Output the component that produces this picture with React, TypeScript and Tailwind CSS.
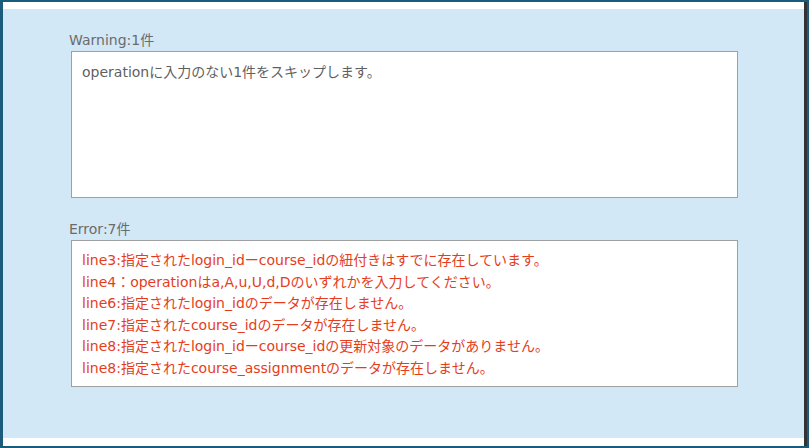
import React from 'react';

const errors = [
  'line3:指定されたlogin_idーcourse_idの紐付きはすでに存在しています。',
  'line4：operationはa,A,u,U,d,Dのいずれかを入力してください。',
  'line6:指定されたlogin_idのデータが存在しません。',
  'line7:指定されたcourse_idのデータが存在しません。',
  'line8:指定されたlogin_idーcourse_idの更新対象のデータがありません。',
  'line8:指定されたcourse_assignmentのデータが存在しません。',
];

const font = { fontFamily: '"DejaVu Sans", "Noto Sans CJK JP", sans-serif' };

export default function App() {
  return (
    <div className="h-[448px] w-[809px] bg-[#1a5c7a] pt-[2px] pb-[2px] pl-[3px] pr-[2px] flex" style={font}>
      <div className="flex-1 flex flex-col">
        <div className="h-[7px] bg-white" />
        <div className="flex-1 bg-[#d2e8f7] pt-[21px] pl-[66px]">
          <div className="h-[20px] leading-[20px] text-[14px] text-[#6b6b6b] mb-[1px]">Warning:1件</div>
          <div className="ml-[2px] w-[667px] h-[147px] bg-white border border-[#a0a0a0] px-[10px] pt-[9px]">
            <p className="leading-[22px] text-[14px] text-[#5f5f5f] whitespace-nowrap">operationに入力のない1件をスキップします。</p>
          </div>
          <div className="mt-[21px] h-[20px] leading-[20px] text-[14px] text-[#6b6b6b] mb-[1px]">Error:7件</div>
          <div className="ml-[2px] w-[667px] h-[147px] bg-white border border-[#a0a0a0] px-[10px] pt-[9px]">
            {errors.map((e, i) => (
              <p key={i} className="leading-[21.6px] text-[14px] text-[#e53d1c] whitespace-nowrap">{e}</p>
            ))}
          </div>
        </div>
        <div className="h-[8px] bg-white" />
      </div>
      <div className="w-[3px] bg-[#333333]" />
    </div>
  );
}
